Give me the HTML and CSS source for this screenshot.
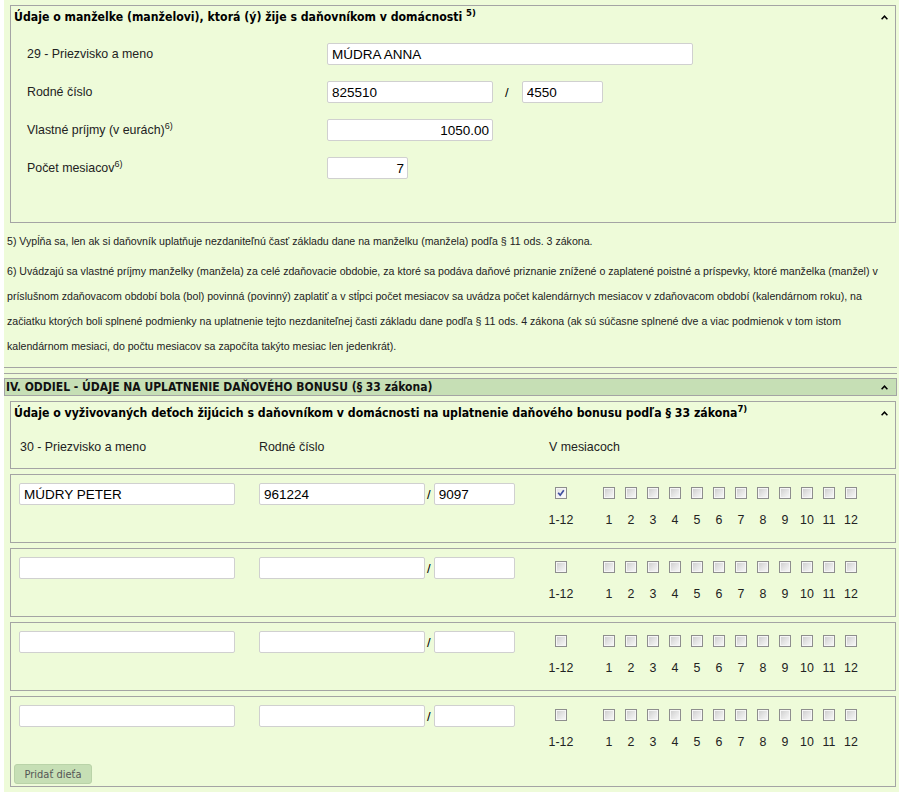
FILE: index.html
```html
<!DOCTYPE html>
<html lang="sk">
<head>
<meta charset="utf-8">
<title>Daňové priznanie</title>
<link rel="stylesheet" href="styles.css">
</head>
<body>
<div class="page">
  <section class="box">
    <div class="box-title">
      <span>Údaje o manželke (manželovi), ktorá (ý) žije s daňovníkom v domácnosti <sup>5)</sup></span>
      <svg class="caret" width="7" height="5" viewBox="0 0 7 5"><path d="M0.6 4.2 L3.5 1.2 L6.4 4.2" fill="none" stroke="#000" stroke-width="1.5"/></svg>
    </div>
    <div class="spouse-body">
      <div class="form-row"><label class="lbl">29 - Priezvisko a meno</label><input class="txt w-name" type="text" value="MÚDRA ANNA"></div>
      <div class="form-row"><label class="lbl">Rodné číslo</label><input class="txt w-rc" type="text" value="825510"><span class="slash">/</span><input class="txt w-short" type="text" value="4550"></div>
      <div class="form-row"><label class="lbl">Vlastné príjmy (v eurách)<sup>6)</sup></label><input class="txt w-rc num" type="text" value="1050.00"></div>
      <div class="form-row"><label class="lbl">Počet mesiacov<sup>6)</sup></label><input class="txt w-short num" type="text" value="7"></div>
    </div>
  </section>

  <div class="notes">
    <p>5) Vypĺňa sa, len ak si daňovník uplatňuje nezdaniteľnú časť základu dane na manželku (manžela) podľa § 11 ods. 3 zákona.</p>
    <p>6) Uvádzajú sa vlastné príjmy manželky (manžela) za celé zdaňovacie obdobie, za ktoré sa podáva daňové priznanie znížené o zaplatené poistné a príspevky, ktoré manželka (manžel) v príslušnom zdaňovacom období bola (bol) povinná (povinný) zaplatiť a v stĺpci počet mesiacov sa uvádza počet kalendárnych mesiacov v zdaňovacom období (kalendárnom roku), na začiatku ktorých boli splnené podmienky na uplatnenie tejto nezdaniteľnej časti základu dane podľa § 11 ods. 4 zákona (ak sú súčasne splnené dve a viac podmienok v tom istom kalendárnom mesiaci, do počtu mesiacov sa započíta takýto mesiac len jedenkrát).</p>
  </div>

  <div class="rule first"></div>
  <div class="rule second"></div>

  <div class="section-bar">
    <span>IV. ODDIEL - ÚDAJE NA UPLATNENIE DAŇOVÉHO BONUSU (§ 33 zákona)</span>
    <svg class="caret" width="7" height="5" viewBox="0 0 7 5"><path d="M0.6 4.2 L3.5 1.2 L6.4 4.2" fill="none" stroke="#000" stroke-width="1.5"/></svg>
  </div>

  <section class="box kids-head-box">
    <div class="box-title">
      <span>Údaje o vyživovaných deťoch žijúcich s daňovníkom v domácnosti na uplatnenie daňového bonusu podľa § 33 zákona<sup>7)</sup></span>
      <svg class="caret" width="7" height="5" viewBox="0 0 7 5"><path d="M0.6 4.2 L3.5 1.2 L6.4 4.2" fill="none" stroke="#000" stroke-width="1.5"/></svg>
    </div>
    <div class="kid-head">
      <span class="h-name">30 - Priezvisko a meno</span>
      <span>Rodné číslo</span>
      <span class="h-months">V mesiacoch</span>
    </div>
  </section>

  <section class="box kid">
    <div class="kid-row">
      <input class="txt k-name" type="text" value="MÚDRY PETER">
      <div class="k-rc"><input class="txt k-rc1" type="text" value="961224"><span class="kslash">/</span><input class="txt k-rc2" type="text" value="9097"></div>
      <div class="months">
        <div class="mcol all"><span class="cb on"><svg width="10" height="10" viewBox="0 0 10 10"><path d="M2.2 4.8 L4.2 7.2 L7.8 2.2" fill="none" stroke="#3f4f9f" stroke-width="1.7"/></svg></span><span class="ml">1-12</span></div>
        <div class="mcol"><span class="cb"></span><span class="ml">1</span></div>
        <div class="mcol"><span class="cb"></span><span class="ml">2</span></div>
        <div class="mcol"><span class="cb"></span><span class="ml">3</span></div>
        <div class="mcol"><span class="cb"></span><span class="ml">4</span></div>
        <div class="mcol"><span class="cb"></span><span class="ml">5</span></div>
        <div class="mcol"><span class="cb"></span><span class="ml">6</span></div>
        <div class="mcol"><span class="cb"></span><span class="ml">7</span></div>
        <div class="mcol"><span class="cb"></span><span class="ml">8</span></div>
        <div class="mcol"><span class="cb"></span><span class="ml">9</span></div>
        <div class="mcol"><span class="cb"></span><span class="ml">10</span></div>
        <div class="mcol"><span class="cb"></span><span class="ml">11</span></div>
        <div class="mcol"><span class="cb"></span><span class="ml">12</span></div>
      </div>
    </div>
  </section>

  <section class="box kid">
    <div class="kid-row">
      <input class="txt k-name" type="text" value="">
      <div class="k-rc"><input class="txt k-rc1" type="text" value=""><span class="kslash">/</span><input class="txt k-rc2" type="text" value=""></div>
      <div class="months">
        <div class="mcol all"><span class="cb"></span><span class="ml">1-12</span></div>
        <div class="mcol"><span class="cb"></span><span class="ml">1</span></div>
        <div class="mcol"><span class="cb"></span><span class="ml">2</span></div>
        <div class="mcol"><span class="cb"></span><span class="ml">3</span></div>
        <div class="mcol"><span class="cb"></span><span class="ml">4</span></div>
        <div class="mcol"><span class="cb"></span><span class="ml">5</span></div>
        <div class="mcol"><span class="cb"></span><span class="ml">6</span></div>
        <div class="mcol"><span class="cb"></span><span class="ml">7</span></div>
        <div class="mcol"><span class="cb"></span><span class="ml">8</span></div>
        <div class="mcol"><span class="cb"></span><span class="ml">9</span></div>
        <div class="mcol"><span class="cb"></span><span class="ml">10</span></div>
        <div class="mcol"><span class="cb"></span><span class="ml">11</span></div>
        <div class="mcol"><span class="cb"></span><span class="ml">12</span></div>
      </div>
    </div>
  </section>

  <section class="box kid">
    <div class="kid-row">
      <input class="txt k-name" type="text" value="">
      <div class="k-rc"><input class="txt k-rc1" type="text" value=""><span class="kslash">/</span><input class="txt k-rc2" type="text" value=""></div>
      <div class="months">
        <div class="mcol all"><span class="cb"></span><span class="ml">1-12</span></div>
        <div class="mcol"><span class="cb"></span><span class="ml">1</span></div>
        <div class="mcol"><span class="cb"></span><span class="ml">2</span></div>
        <div class="mcol"><span class="cb"></span><span class="ml">3</span></div>
        <div class="mcol"><span class="cb"></span><span class="ml">4</span></div>
        <div class="mcol"><span class="cb"></span><span class="ml">5</span></div>
        <div class="mcol"><span class="cb"></span><span class="ml">6</span></div>
        <div class="mcol"><span class="cb"></span><span class="ml">7</span></div>
        <div class="mcol"><span class="cb"></span><span class="ml">8</span></div>
        <div class="mcol"><span class="cb"></span><span class="ml">9</span></div>
        <div class="mcol"><span class="cb"></span><span class="ml">10</span></div>
        <div class="mcol"><span class="cb"></span><span class="ml">11</span></div>
        <div class="mcol"><span class="cb"></span><span class="ml">12</span></div>
      </div>
    </div>
  </section>

  <section class="box kid last">
    <div class="kid-row">
      <input class="txt k-name" type="text" value="">
      <div class="k-rc"><input class="txt k-rc1" type="text" value=""><span class="kslash">/</span><input class="txt k-rc2" type="text" value=""></div>
      <div class="months">
        <div class="mcol all"><span class="cb"></span><span class="ml">1-12</span></div>
        <div class="mcol"><span class="cb"></span><span class="ml">1</span></div>
        <div class="mcol"><span class="cb"></span><span class="ml">2</span></div>
        <div class="mcol"><span class="cb"></span><span class="ml">3</span></div>
        <div class="mcol"><span class="cb"></span><span class="ml">4</span></div>
        <div class="mcol"><span class="cb"></span><span class="ml">5</span></div>
        <div class="mcol"><span class="cb"></span><span class="ml">6</span></div>
        <div class="mcol"><span class="cb"></span><span class="ml">7</span></div>
        <div class="mcol"><span class="cb"></span><span class="ml">8</span></div>
        <div class="mcol"><span class="cb"></span><span class="ml">9</span></div>
        <div class="mcol"><span class="cb"></span><span class="ml">10</span></div>
        <div class="mcol"><span class="cb"></span><span class="ml">11</span></div>
        <div class="mcol"><span class="cb"></span><span class="ml">12</span></div>
      </div>
    </div>
    <button class="add-btn" type="button">Pridať dieťa</button>
  </section>
</div>
</body>
</html>
```

FILE: styles.css
```css
html, body {
  margin: 0;
  padding: 0;
  background: #ffffff;
}

body {
  font-family: "Liberation Sans", Arial, sans-serif;
  font-size: 12px;
  color: #222;
}

.page {
  margin-left: 4px;
  width: 895px;
  background: #eefbd9;
  padding: 5px 0 5px 0;
}

.box {
  margin: 0 3px 0 6px;
  border: 1px solid #a4a4a4;
}

.box-title {
  display: flex;
  justify-content: space-between;
  align-items: center;
  padding: 3px 7px 10px 3px;
  font-family: "DejaVu Sans Condensed", "DejaVu Sans", sans-serif;
  font-weight: bold;
  font-size: 12.2px;
  line-height: 16px;
  color: #000;
}

.box-title sup {
  font-size: 9.5px;
  line-height: 0;
  vertical-align: 5px;
}

.lbl sup {
  font-size: 9px;
  line-height: 0;
  vertical-align: 5px;
}

.caret {
  display: block;
  flex: none;
}

.spouse-body {
  padding: 0 0 35px 16px;
}

.form-row {
  display: flex;
  align-items: center;
  height: 38px;
}

.lbl {
  width: 300px;
  flex: none;
  font-size: 12.4px;
  color: #222;
}

.txt {
  box-sizing: border-box;
  height: 22px;
  margin: 0;
  border: 1px solid #d0d0d0;
  border-radius: 2px;
  padding: 0 3px 0 4px;
  background: #fff;
  font-family: "Liberation Sans", Arial, sans-serif;
  font-size: 13.5px;
  color: #000;
  outline: none;
}

.txt.num {
  text-align: right;
}

.w-name { width: 366px; }
.w-rc { width: 166px; }
.w-short { width: 81px; }

.slash {
  margin: 0 13px 0 12px;
  font-size: 13px;
  color: #000;
}

.notes {
  margin-top: 6px;
  padding: 0 20px 0 3px;
  font-size: 10.6px;
  line-height: 25px;
  color: #222;
}

.notes p {
  margin: 0;
}

.notes p + p {
  margin-top: 5px;
}

.rule {
  border-top: 1px solid #a4a4a4;
  margin-right: 2px;
}

.rule.first { margin-top: 8px; }
.rule.second { margin-top: 5px; }

.section-bar {
  display: flex;
  justify-content: space-between;
  align-items: center;
  margin: 4px 2px 0 0;
  height: 16px;
  border: 1px solid #a4a4a4;
  background: #c6dfb5;
  padding: 0 8px 0 1px;
  font-family: "DejaVu Sans Condensed", "DejaVu Sans", sans-serif;
  font-weight: bold;
  font-size: 12px;
  line-height: 16px;
  color: #111;
}

.kids-head-box {
  margin-top: 5px;
}

.kid-head {
  display: grid;
  grid-template-columns: 240px 287px auto;
  padding: 9px 0 14px 8px;
  line-height: 14px;
  font-size: 12.4px;
  color: #222;
}

.kid-head .h-name { padding-left: 1px; }
.kid-head .h-months { padding-left: 3px; }

.kid {
  margin-top: 5px;
  padding: 8px 0 0 3px;
}

.kid.last {
  padding-bottom: 2px;
}

.kid-row {
  display: grid;
  grid-template-columns: 240px 287px auto;
  align-items: start;
  height: 44px;
  padding-left: 5px;
  margin-bottom: 15px;
}

.k-name { width: 216px; }

.k-rc {
  display: flex;
  align-items: center;
}

.k-rc1 { width: 166px; }
.k-rc2 { width: 81px; }

.kslash {
  margin: 0 3px 0 2px;
  font-size: 13px;
  color: #000;
}

.months {
  display: flex;
}

.mcol {
  width: 22px;
  display: flex;
  flex-direction: column;
  align-items: center;
}

.mcol.all {
  width: 30px;
  margin-right: 22px;
}

.cb {
  display: block;
  box-sizing: border-box;
  width: 12px;
  height: 12px;
  margin-top: 4px;
  border: 1px solid #8e8e8e;
  background: linear-gradient(135deg, #cbcbcb 0%, #e6e6e6 55%, #fafafa 100%);
  box-shadow: inset 0 0 0 1px #f6f6f6;
}

.cb.on {
  background: linear-gradient(135deg, #e2e2e2 0%, #f4f4f4 60%, #ffffff 100%);
}

.cb svg {
  display: block;
}

.ml {
  margin-top: 14px;
  line-height: 14px;
  font-size: 12.4px;
  color: #222;
  white-space: nowrap;
}

.add-btn {
  display: block;
  margin: 2px 0 0 0;
  height: 20px;
  width: 78px;
  padding: 0;
  border: 1px solid #b9d3a8;
  border-radius: 3px;
  background: #c6dfb5;
  font-family: "DejaVu Sans Condensed", "DejaVu Sans", sans-serif;
  font-size: 11px;
  color: #555;
}
```
